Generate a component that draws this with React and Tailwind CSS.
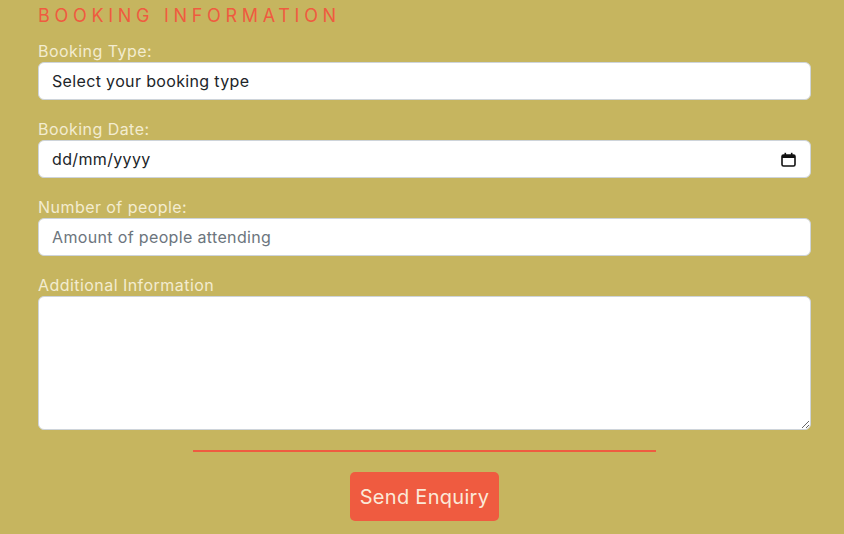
import React from "react";

function Label({ children }) {
  return (
    <label className="block text-[16px] leading-[22px] tracking-[0.45px] text-[#f3ecd0]">{children}</label>
  );
}

export default function App() {
  return (
    <div className="w-[844px] h-[534px] overflow-hidden bg-[#c6b55f] font-['Inter',sans-serif]">
      <div className="mx-[38px] w-[773px]">
        <h2 className="pt-[5px] h-[40px] text-[18px] leading-[22px] tracking-[4.7px] text-[#ef5b40] font-normal">
          BOOKING INFORMATION
        </h2>
        <div className="mb-[18px]">
          <Label>Booking Type:</Label>
          <div className="h-[38px] rounded-[6px] border border-[#ced4da] bg-white px-[13px] flex items-center text-[16px] tracking-[0.35px] text-[#212529]">
            Select your booking type
          </div>
        </div>
        <div className="mb-[18px]">
          <Label>Booking Date:</Label>
          <div className="h-[38px] rounded-[6px] border border-[#ced4da] bg-white pl-[13px] pr-[14px] flex items-center justify-between text-[16px] tracking-[0.35px] text-[#212529]">
            <span>dd/mm/yyyy</span>
            <svg width="15" height="15" viewBox="0 0 15 15">
              <rect x="1" y="3" width="13" height="11" rx="1.5" fill="none" stroke="#111" strokeWidth="1.6" />
              <rect x="1" y="3" width="13" height="3" fill="#111" />
              <rect x="3.5" y="0.8" width="1.6" height="3" fill="#111" />
              <rect x="9.9" y="0.8" width="1.6" height="3" fill="#111" />
            </svg>
          </div>
        </div>
        <div className="mb-[18px]">
          <Label>Number of people:</Label>
          <input
            type="text"
            placeholder="Amount of people attending"
            className="block w-full h-[38px] rounded-[6px] border border-[#ced4da] bg-white px-[13px] text-[16px] tracking-[0.35px] text-[#212529] placeholder:text-[#6c757d] outline-none"
          />
        </div>
        <div>
          <Label>Additional Information</Label>
          <textarea className="block w-full h-[134px] rounded-[6px] border border-[#ced4da] bg-white px-[13px] py-[6px] text-[16px] outline-none" />
        </div>
        <div className="mt-[20px] mx-auto w-[463px] h-[2px] bg-[#ef5b40]" />
        <div className="mt-[20px] flex justify-center">
          <button className="w-[149px] h-[49px] rounded-[5px] bg-[#ef5b40] text-[#fbe9d8] text-[20px] tracking-[0.3px]">
            Send Enquiry
          </button>
        </div>
      </div>
    </div>
  );
}
